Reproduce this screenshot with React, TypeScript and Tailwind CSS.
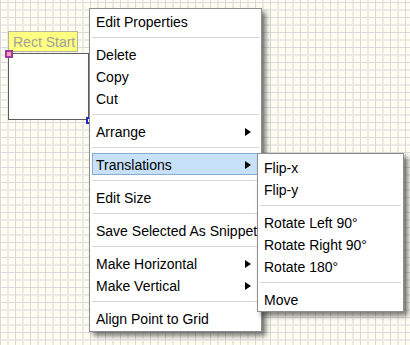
import React from "react";

type Entry = { label: string; sub?: boolean; active?: boolean } | "sep";

const mainItems: Entry[] = [
  { label: "Edit Properties" },
  "sep",
  { label: "Delete" },
  { label: "Copy" },
  { label: "Cut" },
  "sep",
  { label: "Arrange", sub: true },
  "sep",
  { label: "Translations", sub: true, active: true },
  "sep",
  { label: "Edit Size" },
  "sep",
  { label: "Save Selected As Snippet" },
  "sep",
  { label: "Make Horizontal", sub: true },
  { label: "Make Vertical", sub: true },
  "sep",
  { label: "Align Point to Grid" },
];

const subItems: Entry[] = [
  { label: "Flip-x" },
  { label: "Flip-y" },
  "sep",
  { label: "Rotate Left 90°" },
  { label: "Rotate Right 90°" },
  { label: "Rotate 180°" },
  "sep",
  { label: "Move" },
];

function Arrow() {
  return (
    <svg width="6" height="8" viewBox="0 0 6 8" className="absolute right-[7px] top-[7px]">
      <polygon points="0,0 6,4 0,8" fill="#000" />
    </svg>
  );
}

function MenuList({ items }: { items: Entry[] }) {
  return (
    <>
      {items.map((it, i) =>
        it === "sep" ? (
          <div key={i} className="mx-[2px] my-[5px] h-px bg-[#d7d7d7]" />
        ) : (
          <div
            key={i}
            className={`relative mx-[2px] flex h-[22px] items-center border pl-[3px] pt-[2px] whitespace-nowrap ${
              it.active ? "border-[#8aabd0] bg-[#c7e1fa]" : "border-transparent"
            }`}
          >
            {it.label}
            {it.sub && <Arrow />}
          </div>
        )
      )}
    </>
  );
}

export default function App() {
  return (
    <div
      className="relative h-[345px] w-[410px] overflow-hidden bg-[#fdfdf2] bg-[linear-gradient(to_right,#d9d9d9_1px,transparent_1px),linear-gradient(to_bottom,#d9d9d9_1px,transparent_1px),linear-gradient(to_right,transparent_7px,#ebebe6_7px,#ebebe6_9px,transparent_9px),linear-gradient(to_bottom,transparent_7px,#ebebe6_7px,#ebebe6_9px,transparent_9px)] bg-[size:15px_15px] bg-[position:0px_2px] text-[14px] text-black"
      style={{ fontFamily: '"Liberation Sans", Arial, sans-serif' }}
    >
      {/* diagram shape */}
      <div className="absolute left-[8px] top-[31px] flex h-[21px] w-[70px] items-center border border-[#b4b4a0] bg-[#ffff80] pl-[4px] pt-px text-[#a0a0a0]">
        Rect Start
      </div>
      <div className="absolute left-[8px] top-[53px] h-[67px] w-[81px] border border-[#5c5c5c] bg-white" />
      <div className="absolute left-[5px] top-[50px] h-[8px] w-[8px] border-2 border-[#9b3d9b] bg-[#ffa0b4]" />
      <div className="absolute left-[86px] top-[117px] h-[7px] w-[5px] border-2 border-[#2828c8] bg-white" />

      {/* context menu */}
      <div className="absolute left-[89px] top-[8px] w-[173px] border border-[#8e8e8e] bg-white pb-[2px] pt-px shadow-[4px_4px_5px_rgba(0,0,0,0.5)]">
        <MenuList items={mainItems} />
      </div>

      {/* submenu */}
      <div className="absolute left-[257px] top-[153px] w-[147px] border border-[#8e8e8e] bg-white pb-px pt-[2px] shadow-[4px_4px_5px_rgba(0,0,0,0.5)]">
        <MenuList items={subItems} />
      </div>
    </div>
  );
}
